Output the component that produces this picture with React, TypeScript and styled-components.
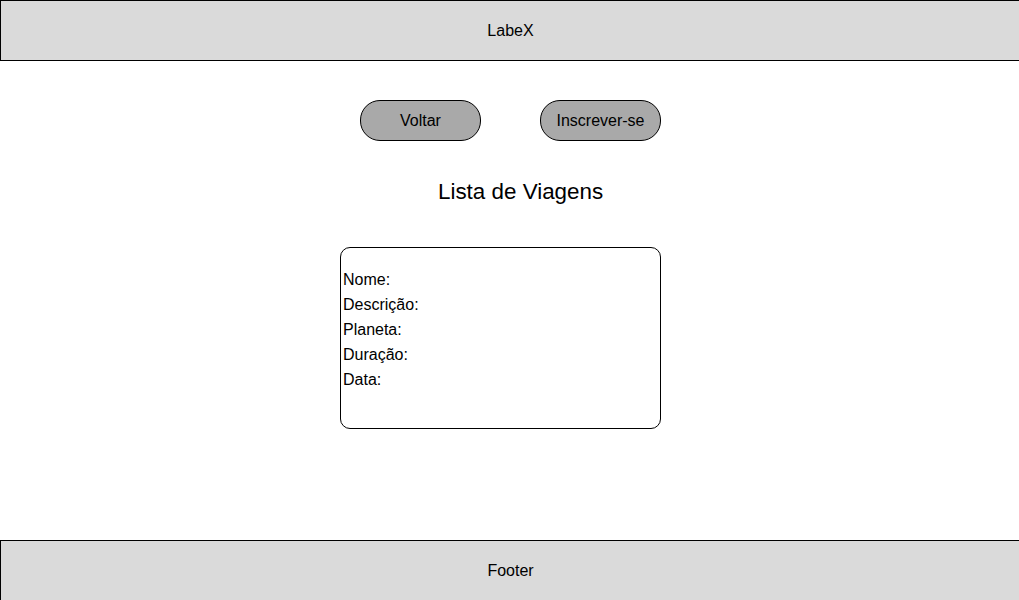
import React from "react";
import styled, { createGlobalStyle } from "styled-components";

const Global = createGlobalStyle`
  html, body { margin: 0; padding: 0; background: #fff; }
  body { font-family: "Liberation Sans", Arial, sans-serif; color: #000; overflow: hidden; }
  * { box-sizing: border-box; }
`;

const Page = styled.div`
  width: 1019px;
  height: 600px;
  display: flex;
  flex-direction: column;
  overflow: hidden;
`;

const Bar = styled.div`
  flex: none;
  width: 1021px;
  height: 61px;
  background: #dadada;
  border: 1px solid #000;
  display: flex;
  align-items: center;
  justify-content: center;
  font-size: 16px;
`;

const Main = styled.main`
  flex: none;
  height: 479px;
  display: flex;
  flex-direction: column;
  align-items: flex-start;
`;

const ButtonRow = styled.div`
  display: flex;
  gap: 59px;
  margin: 39px 0 0 360px;
`;

const Pill = styled.button`
  width: 121px;
  height: 41px;
  border: 1px solid #000;
  border-radius: 20px;
  background: #a9a9a9;
  font-family: "Liberation Sans", Arial, sans-serif;
  font-size: 16px;
  color: #000;
  padding: 0;
  display: flex;
  align-items: center;
  justify-content: center;
`;

const Title = styled.h1`
  margin: 38px 0 0 438px;
  font-size: 22.4px;
  font-weight: normal;
  line-height: 26px;
`;

const Card = styled.div`
  margin: 42px 0 0 340px;
  width: 321px;
  height: 182px;
  border: 1px solid #000;
  border-radius: 10px;
  padding: 19px 0 0 2px;
  font-size: 16px;
  line-height: 25px;
`;

const Line = styled.div``;

export default function App() {
  return (
    <Page>
      <Global />
      <Bar>LabeX</Bar>
      <Main>
        <ButtonRow>
          <Pill>Voltar</Pill>
          <Pill>Inscrever-se</Pill>
        </ButtonRow>
        <Title>Lista de Viagens</Title>
        <Card>
          <Line>Nome:</Line>
          <Line>Descrição:</Line>
          <Line>Planeta:</Line>
          <Line>Duração:</Line>
          <Line>Data:</Line>
        </Card>
      </Main>
      <Bar>Footer</Bar>
    </Page>
  );
}
